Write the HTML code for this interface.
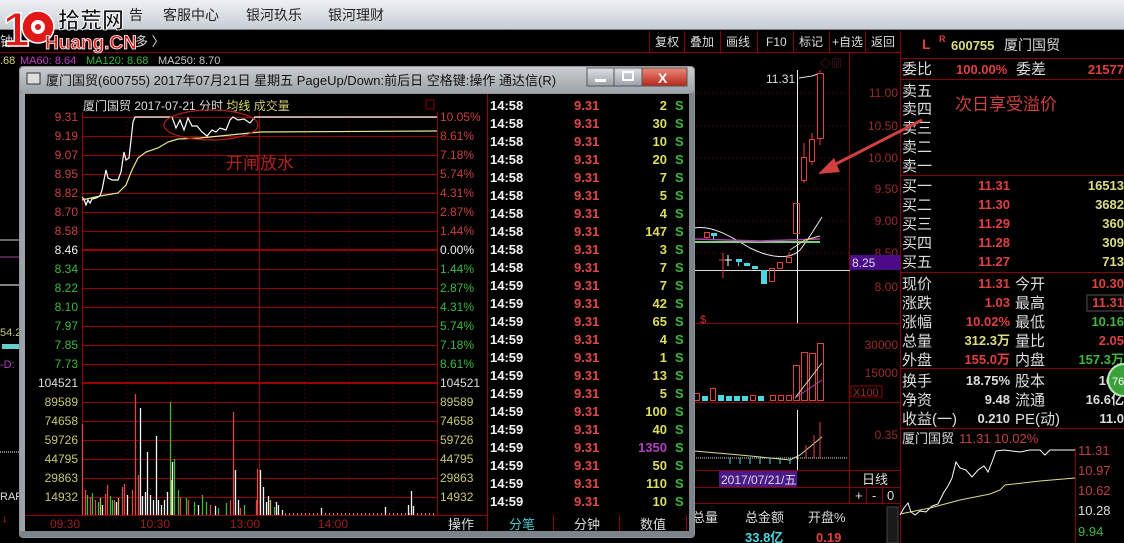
<!DOCTYPE html>
<html><head><meta charset="utf-8"><style>
html,body{margin:0;padding:0;background:#000;width:1124px;height:543px;overflow:hidden}
svg{display:block}
text{font-family:"Liberation Sans","Noto Sans CJK SC",sans-serif}
</style></head><body>
<svg width="1124" height="543" viewBox="0 0 1124 543" xmlns="http://www.w3.org/2000/svg">
<defs>
<linearGradient id="mb" x1="0" y1="0" x2="0" y2="1"><stop offset="0" stop-color="#eef1f4"/><stop offset="1" stop-color="#c5ccd3"/></linearGradient>
<linearGradient id="tb" x1="0" y1="0" x2="0" y2="1"><stop offset="0" stop-color="#c9cdd1"/><stop offset="1" stop-color="#9da3a9"/></linearGradient>
<linearGradient id="cl" x1="0" y1="0" x2="0" y2="1"><stop offset="0" stop-color="#e88a7a"/><stop offset="1" stop-color="#b8281a"/></linearGradient>
<linearGradient id="bt" x1="0" y1="0" x2="0" y2="1"><stop offset="0" stop-color="#dde1e5"/><stop offset="1" stop-color="#9aa1a8"/></linearGradient>
</defs>
<rect width="1124" height="543" fill="#000"/>
<rect x="0" y="0" width="1124" height="30" fill="url(#mb)"/>
<rect x="0" y="29" width="1124" height="1" fill="#7d858c"/>
<g font-size="14" fill="#222">
<text x="129" y="20">告</text>
<text x="163" y="20">客服中心</text><text x="246" y="20">银河玖乐</text><text x="328" y="20">银河理财</text>
</g>
<text x="0" y="46" font-size="13" fill="#ddd">钟</text>
<text x="135" y="46" font-size="13" fill="#ddd">多 〉</text>
<rect x="0" y="52" width="900" height="1" fill="#8b0000"/>
<g stroke="#8b0000" stroke-width="1"><line x1="649.5" y1="31" x2="649.5" y2="52"/><line x1="684.5" y1="31" x2="684.5" y2="52"/><line x1="720.5" y1="31" x2="720.5" y2="52"/><line x1="757.5" y1="31" x2="757.5" y2="52"/><line x1="793.5" y1="31" x2="793.5" y2="52"/><line x1="829.5" y1="31" x2="829.5" y2="52"/><line x1="865.5" y1="31" x2="865.5" y2="52"/><line x1="900.5" y1="31" x2="900.5" y2="543"/></g>
<g font-size="12" fill="#ddd">
<text x="655" y="46">复权</text><text x="690" y="46">叠加</text><text x="726" y="46">画线</text><text x="766" y="46">F10</text><text x="799" y="46">标记</text><text x="832" y="46">+自选</text><text x="871" y="46">返回</text>
</g>
<g font-size="11">
<text x="0" y="64" fill="#d8d870">.68</text><text x="20" y="64" fill="#c040c0">MA60: 8.64</text><text x="86" y="64" fill="#3cb83c">MA120: 8.68</text><text x="158" y="64" fill="#c8c8c8">MA250: 8.70</text>
</g>
<text x="3" y="46" font-size="48" font-weight="bold" fill="#e01818" stroke="#fff" stroke-width="1.5" font-family="Liberation Sans,sans-serif">1</text>
<circle cx="38" cy="27" r="16" fill="#e01818" stroke="#fff" stroke-width="1.5"/>
<circle cx="38" cy="27" r="7" fill="#fff"/><circle cx="38" cy="27" r="3" fill="#e01818"/>
<text x="58" y="28" font-size="22" font-weight="bold" fill="#111" stroke="#fff" stroke-width="0.8">拾荒网</text>
<text x="45" y="49" font-size="19" font-weight="bold" fill="#e01818" stroke="#fff" stroke-width="0.8">Huang.CN</text>

<g font-size="11">
<line x1="0" y1="240" x2="20" y2="240" stroke="#ccc"/><line x1="0" y1="257" x2="20" y2="257" stroke="#a040a0"/><line x1="0" y1="285" x2="20" y2="285" stroke="#fff"/>
<text x="0" y="336" fill="#c8c870">54.2</text>
<rect x="2" y="344" width="18" height="5" fill="#6cc"/>
<text x="0" y="368" fill="#b040c0">-D:</text>
<line x1="0" y1="452" x2="20" y2="452" stroke="#fff" stroke-dasharray="1 1"/>
<text x="0" y="500" fill="#ddd">RAR</text>
<text x="2" y="522" fill="#e02020">↓</text>
</g>

<g stroke="#600" stroke-dasharray="1 3">
<line x1="692" y1="93" x2="850" y2="93"/><line x1="692" y1="126" x2="850" y2="126"/><line x1="692" y1="158" x2="850" y2="158"/><line x1="692" y1="189" x2="850" y2="189"/><line x1="692" y1="221" x2="850" y2="221"/><line x1="692" y1="253" x2="850" y2="253"/>
</g>
<g stroke="#8b0000"><line x1="849.5" y1="53" x2="849.5" y2="503"/><line x1="692" y1="323.5" x2="900" y2="323.5"/><line x1="692" y1="402.5" x2="900" y2="402.5"/><line x1="692" y1="470.5" x2="900" y2="470.5"/><line x1="692" y1="487.5" x2="900" y2="487.5"/><line x1="692" y1="503.5" x2="900" y2="503.5"/></g>
<g font-size="12" fill="#9a2a2a" text-anchor="end">
<text x="898" y="97">11.00</text><text x="898" y="130">10.50</text><text x="898" y="162">10.00</text><text x="898" y="193">9.50</text><text x="898" y="225">9.00</text><text x="898" y="257">8.50</text><text x="898" y="291">8.00</text>
<text x="898" y="349">30000</text><text x="898" y="377">15000</text><text x="898" y="439">0.35</text>
</g>
<rect x="851" y="386" width="31" height="11" fill="none" stroke="#8b0000"/><text x="853" y="396" font-size="11" fill="#9a2a2a">X100</text>
<text x="820" y="67" font-size="11" fill="#6a2020">◇▥</text>
<rect x="850" y="255" width="50" height="15" fill="#4a0a8a"/><text x="852" y="267" font-size="12" fill="#ddd">8.25</text>
<line x1="692" y1="270.5" x2="850" y2="270.5" stroke="#ddd"/>
<line x1="797.5" y1="70" x2="797.5" y2="323" stroke="#eee"/>
<line x1="797.5" y1="410" x2="797.5" y2="470" stroke="#eee"/>
<text x="766" y="83" font-size="12" fill="#ddd">11.31</text>
<polyline points="799,78 812,76 818,74" fill="none" stroke="#ddd"/>
<path d="M694,228 C712,225 730,236 750,248 C770,258 790,260 800,250 C808,240 815,228 822,217" fill="none" stroke="#eee"/>
<line x1="694" y1="242" x2="820" y2="242" stroke="#7cd07c" stroke-width="2"/>
<path d="M694,239 L760,241 L820,239" fill="none" stroke="#b040b0" stroke-width="1.5"/>
<path d="M790,250 L805,240 L820,236" fill="none" stroke="#dddd90"/>
<g fill="none" stroke="#e04040">
<rect x="704.5" y="232.5" width="5" height="5"/>
<line x1="723" y1="253" x2="723" y2="278"/><line x1="719" y1="260" x2="727" y2="260"/>
<rect x="769.5" y="268.5" width="5" height="13"/><rect x="777.5" y="262.5" width="5" height="6"/><rect x="786.5" y="257.5" width="5" height="5"/><line x1="789" y1="252" x2="789" y2="257"/>
<rect x="793.5" y="203.5" width="6" height="30"/>
<line x1="804" y1="143" x2="804" y2="183"/><rect x="801.5" y="157.5" width="5" height="23" fill="#000"/>
<line x1="812" y1="133" x2="812" y2="165"/><rect x="809.5" y="139.5" width="5" height="22" fill="#000"/>
<line x1="820" y1="70" x2="820" y2="145"/><rect x="817.5" y="73.5" width="6" height="65" fill="#000"/>
</g>
<g fill="#4cd8e0"><rect x="711" y="233" width="6" height="3"/><rect x="713" y="233" width="1" height="6"/><rect x="736" y="259" width="6" height="3"/><rect x="738" y="259" width="1" height="7"/><rect x="744" y="263" width="6" height="3"/><rect x="752" y="266" width="6" height="3"/><rect x="761" y="270" width="6" height="14"/></g>
<line x1="728" y1="255" x2="728" y2="266" stroke="#fff"/><line x1="725" y1="260" x2="732" y2="260" stroke="#fff"/>
<text x="700" y="323" font-size="11" fill="#d03030">$</text>
<g fill="none" stroke="#e04040"><rect x="793.5" y="365.5" width="6" height="35"/><rect x="801.5" y="352.5" width="6" height="48"/><rect x="809.5" y="353.5" width="6" height="47"/><rect x="817.5" y="343.5" width="6" height="57"/>
<rect x="710.5" y="388.5" width="5" height="12"/><rect x="750.5" y="395.5" width="5" height="5"/><rect x="770.5" y="395.5" width="5" height="5"/><rect x="778.5" y="395.5" width="5" height="5"/><rect x="786.5" y="395.5" width="5" height="5"/><rect x="694.5" y="393.5" width="5" height="7"/></g>
<g fill="#4cd8e0"><rect x="702" y="396" width="6" height="5"/><rect x="718" y="395" width="6" height="6"/><rect x="726" y="396" width="6" height="5"/><rect x="734" y="396" width="6" height="5"/><rect x="742" y="396" width="6" height="5"/><rect x="758" y="396" width="6" height="5"/></g>
<path d="M795,398 L822,363" stroke="#ddd8a0" fill="none"/><path d="M795,398 L822,380" stroke="#b040b0" fill="none"/>
<path d="M694,451 L740,455 L790,460 L800,455 L822,437" stroke="#dddd90" fill="none"/>
<line x1="694" y1="458" x2="848" y2="458" stroke="#ddd" stroke-dasharray="1 1"/>
<g stroke="#4cd8e0"><line x1="730" y1="458" x2="730" y2="464"/><line x1="740" y1="458" x2="740" y2="464"/><line x1="750" y1="458" x2="750" y2="464"/><line x1="760" y1="458" x2="760" y2="464"/><line x1="770" y1="458" x2="770" y2="464"/><line x1="780" y1="458" x2="780" y2="464"/><line x1="790" y1="458" x2="790" y2="464"/></g>
<g stroke="#e04040"><line x1="806" y1="445" x2="806" y2="458"/><line x1="814" y1="435" x2="814" y2="458"/><line x1="820" y1="422" x2="820" y2="458"/></g>
<rect x="719" y="471" width="78" height="16" fill="#4a1a8a"/><text x="721" y="484" font-size="12" fill="#ddd">2017/07/21/五</text>
<text x="862" y="484" font-size="13" fill="#ddd">日线</text>
<g font-size="13" fill="#ddd"><text x="855" y="500">+</text><text x="872" y="500">-</text><text x="887" y="500">0</text></g>
<line x1="866.5" y1="488" x2="866.5" y2="503" stroke="#8b0000"/><line x1="882.5" y1="488" x2="882.5" y2="503" stroke="#8b0000"/>
<g font-size="13" fill="#ddd"><text x="692" y="522">总量</text><text x="745" y="522">总金额</text><text x="808" y="522">开盘%</text></g>
<text x="745" y="542" font-size="13" font-weight="bold" fill="#4cd8e0">33.8亿</text><text x="816" y="542" font-size="13" font-weight="bold" fill="#e04040">0.19</text>
<rect x="887" y="507" width="11" height="36" fill="#1a1a1a" stroke="#444"/>

<text x="922" y="49" font-size="14" font-weight="bold" fill="#e04040">L</text>
<text x="939" y="42" font-size="9" font-weight="bold" fill="#e04040">R</text>
<text x="951" y="50" font-size="13" font-weight="bold" fill="#dddd80">600755</text>
<text x="1004" y="50" font-size="14" fill="#ddd">厦门国贸</text>
<line x1="900" y1="58.5" x2="1124" y2="58.5" stroke="#8b0000"/>
<g font-size="15" fill="#ddd">
<text x="902" y="74">委比</text>
<text x="902" y="96">卖五</text><text x="902" y="114">卖四</text><text x="902" y="133">卖三</text><text x="902" y="152">卖二</text><text x="902" y="171">卖一</text>
<text x="902" y="191">买一</text><text x="902" y="210">买二</text><text x="902" y="229">买三</text><text x="902" y="248">买四</text><text x="902" y="267">买五</text>
<text x="902" y="289">现价</text><text x="902" y="308">涨跌</text><text x="902" y="327">涨幅</text><text x="902" y="346">总量</text><text x="902" y="365">外盘</text>
<text x="902" y="386">换手</text><text x="902" y="405">净资</text><text x="902" y="424">收益(一)</text>
<text x="1016" y="74">委差</text>
<text x="1015" y="289">今开</text><text x="1015" y="308">最高</text><text x="1015" y="327">最低</text><text x="1015" y="346">量比</text><text x="1015" y="365">内盘</text>
<text x="1015" y="386">股本</text><text x="1015" y="405">流通</text><text x="1015" y="424">PE(动)</text>
</g>
<g stroke="#8b0000"><line x1="900" y1="79.5" x2="1124" y2="79.5"/><line x1="900" y1="175.5" x2="1124" y2="175.5"/><line x1="900" y1="272.5" x2="1124" y2="272.5"/><line x1="900" y1="368.5" x2="1124" y2="368.5"/><line x1="900" y1="428.5" x2="1124" y2="428.5"/><line x1="1075.5" y1="448" x2="1075.5" y2="543"/></g>
<g font-size="13" font-weight="bold">
<text x="956" y="74" fill="#e04040">100.00%</text><text x="1124" y="74" fill="#e04040" text-anchor="end">21577</text>
<g fill="#e04040" text-anchor="end"><text x="1010" y="190">11.31</text><text x="1010" y="209">11.30</text><text x="1010" y="228">11.29</text><text x="1010" y="247">11.28</text><text x="1010" y="266">11.27</text></g>
<g fill="#dddd80" text-anchor="end"><text x="1124" y="190">16513</text><text x="1124" y="209">3682</text><text x="1124" y="228">360</text><text x="1124" y="247">309</text><text x="1124" y="266">713</text></g>
<g text-anchor="end">
<text x="1010" y="288" fill="#e04040">11.31</text><text x="1010" y="307" fill="#e04040">1.03</text><text x="1010" y="326" fill="#e04040">10.02%</text><text x="1010" y="345" fill="#dddd80">312.3万</text><text x="1010" y="364" fill="#e04040">155.0万</text>
<text x="1010" y="385" fill="#ddd">18.75%</text><text x="1010" y="404" fill="#ddd">9.48</text><text x="1010" y="423" fill="#ddd">0.210</text>
<text x="1124" y="288" fill="#e04040">10.30</text><text x="1124" y="307" fill="#e04040">11.31</text><text x="1124" y="326" fill="#3cb83c">10.16</text><text x="1124" y="345" fill="#e04040">2.05</text><text x="1124" y="364" fill="#3cb83c">157.3万</text>
<text x="1124" y="385" fill="#ddd">16.6</text><text x="1124" y="404" fill="#ddd">16.6亿</text><text x="1124" y="423" fill="#ddd">11.0</text>
</g></g>
<rect x="1087" y="295" width="37" height="16" fill="none" stroke="#555"/>
<circle cx="1124" cy="380" r="16" fill="#3aa03a" stroke="#bde8bd" stroke-width="2"/><text x="1112" y="385" font-size="11" fill="#fff">76</text>
<text x="902" y="443" font-size="13" fill="#ddd">厦门国贸</text><text x="959" y="443" font-size="13" fill="#c04040">11.31  10.02%</text>
<g font-size="13" text-anchor="start"><text x="1078" y="455" fill="#c04040">11.31</text><text x="1078" y="475" fill="#c04040">10.97</text><text x="1078" y="495" fill="#c04040">10.62</text><text x="1078" y="515" fill="#ddd">10.28</text><text x="1078" y="536" fill="#3cb83c">9.94</text></g>
<path d="M900,515 L904,508 L908,503 L911,512 L915,515 L920,511 L926,512 L932,506 L938,504 L944,492 L948,486 L952,478 L956,462 L960,468 L966,470 L972,477 L978,470 L984,466 L988,472 L992,462 L996,451 L1004,450 L1012,451 L1020,452 L1030,450 L1040,450 L1045,455 L1050,450 L1075,450" fill="none" stroke="#fff"/>
<path d="M900,514 L930,508 L960,500 L990,494 L1000,490 L1005,485 L1040,481 L1075,478" fill="none" stroke="#dddd90"/>

<text x="955" y="110" font-size="17" fill="#d04040">次日享受溢价</text>
<line x1="922" y1="120" x2="828" y2="168" stroke="#d04040" stroke-width="3"/>
<polygon points="818,174 834,158 840,172" fill="#d04040"/>

<rect x="19" y="66" width="676" height="472" fill="#8e949a" rx="4"/>
<rect x="20" y="67" width="674" height="26" fill="url(#tb)" rx="4"/>
<rect x="20" y="93" width="5" height="443" fill="#9da3a9"/>
<rect x="689" y="93" width="5" height="443" fill="#7d838a"/>
<rect x="20" y="531" width="674" height="6" fill="#7d838a"/>
<rect x="25" y="94" width="664" height="437" fill="#000"/>
<rect x="27" y="73" width="13" height="11" fill="#ddd" stroke="#333"/>
<text x="46" y="85" font-size="13" fill="#111">厦门国贸(600755) 2017年07月21日 星期五 PageUp/Down:前后日 空格键:操作 通达信(R)</text>
<rect x="587" y="68" width="27" height="18" fill="url(#bt)" stroke="#555"/><rect x="595" y="79" width="11" height="3" fill="#fff"/>
<rect x="614" y="68" width="28" height="18" fill="url(#bt)" stroke="#555"/><rect x="623" y="72" width="10" height="8" fill="none" stroke="#fff" stroke-width="2"/>
<rect x="642" y="68" width="45" height="18" fill="url(#cl)" stroke="#555"/><text x="658" y="83" font-size="14" font-weight="bold" fill="#fff">X</text>

<g stroke="#9a0000">
<line x1="82" y1="117.5" x2="437" y2="117.5"/><line x1="82" y1="136.5" x2="437" y2="136.5"/><line x1="82" y1="155.5" x2="437" y2="155.5"/><line x1="82" y1="174.5" x2="437" y2="174.5"/><line x1="82" y1="193.5" x2="437" y2="193.5"/><line x1="82" y1="212.5" x2="437" y2="212.5"/><line x1="82" y1="231.5" x2="437" y2="231.5"/>
<line x1="82" y1="250" x2="437" y2="250" stroke-width="2"/>
<line x1="82" y1="269.5" x2="437" y2="269.5"/><line x1="82" y1="288.5" x2="437" y2="288.5"/><line x1="82" y1="307.5" x2="437" y2="307.5"/><line x1="82" y1="326.5" x2="437" y2="326.5"/><line x1="82" y1="345.5" x2="437" y2="345.5"/><line x1="82" y1="364.5" x2="437" y2="364.5"/>
<line x1="82" y1="383" x2="437" y2="383" stroke-width="2"/>
<line x1="82" y1="402.5" x2="437" y2="402.5"/><line x1="82" y1="421.5" x2="437" y2="421.5"/><line x1="82" y1="440.5" x2="437" y2="440.5"/><line x1="82" y1="459.5" x2="437" y2="459.5"/><line x1="82" y1="478.5" x2="437" y2="478.5"/><line x1="82" y1="497.5" x2="437" y2="497.5"/><line x1="25" y1="515.5" x2="487" y2="515.5"/>
<line x1="82.5" y1="112" x2="82.5" y2="515"/><line x1="259.5" y1="112" x2="259.5" y2="515"/><line x1="437.5" y1="112" x2="437.5" y2="515"/>
</g>
<g stroke="#6a0000" stroke-dasharray="1 3"><line x1="126.5" y1="117" x2="126.5" y2="515"/><line x1="171.5" y1="117" x2="171.5" y2="515"/><line x1="215.5" y1="117" x2="215.5" y2="515"/><line x1="304.5" y1="117" x2="304.5" y2="515"/><line x1="348.5" y1="117" x2="348.5" y2="515"/><line x1="393.5" y1="117" x2="393.5" y2="515"/></g>
<line x1="487.5" y1="94" x2="487.5" y2="531" stroke="#9a0000"/>
<text x="83" y="110" font-size="12" fill="#ddd">厦门国贸  2017-07-21 分时 <tspan fill="#dddd60">均线</tspan> <tspan fill="#c8c870">成交量</tspan></text>
<rect x="426" y="100" width="8" height="9" fill="none" stroke="#8b0000"/>
<g font-size="12" text-anchor="end">
<g fill="#c84040"><text x="78" y="121">9.31</text><text x="78" y="140">9.19</text><text x="78" y="159">9.07</text><text x="78" y="178">8.95</text><text x="78" y="197">8.82</text><text x="78" y="216">8.70</text><text x="78" y="235">8.58</text></g>
<text x="78" y="254" fill="#eee">8.46</text>
<g fill="#3cb83c"><text x="78" y="273">8.34</text><text x="78" y="292">8.22</text><text x="78" y="311">8.10</text><text x="78" y="330">7.97</text><text x="78" y="349">7.85</text><text x="78" y="368">7.73</text></g>
<text x="78" y="387" fill="#ddd">104521</text>
<g fill="#c8c870"><text x="78" y="406">89589</text><text x="78" y="425">74658</text><text x="78" y="444">59726</text><text x="78" y="463">44795</text><text x="78" y="482">29863</text><text x="78" y="501">14932</text></g>
</g>
<g font-size="12">
<g fill="#c84040"><text x="440" y="121">10.05%</text><text x="440" y="140">8.61%</text><text x="440" y="159">7.18%</text><text x="440" y="178">5.74%</text><text x="440" y="197">4.31%</text><text x="440" y="216">2.87%</text><text x="440" y="235">1.44%</text></g>
<text x="440" y="254" fill="#eee">0.00%</text>
<g fill="#3cb83c"><text x="440" y="273">1.44%</text><text x="440" y="292">2.87%</text><text x="440" y="311">4.31%</text><text x="440" y="330">5.74%</text><text x="440" y="349">7.18%</text><text x="440" y="368">8.61%</text></g>
<text x="440" y="387" fill="#ddd">104521</text>
<g fill="#c8c870"><text x="440" y="406">89589</text><text x="440" y="425">74658</text><text x="440" y="444">59726</text><text x="440" y="463">44795</text><text x="440" y="482">29863</text><text x="440" y="501">14932</text></g>
<g fill="#9a2020"><text x="50" y="528">09:30</text><text x="140" y="528">10:30</text><text x="230" y="528">13:00</text><text x="318" y="528">14:00</text></g>
<text x="448" y="529" fill="#ddd" font-size="13">操作</text>
</g>
<path d="M82,197 L84,199 L86,205 L88,200 L90,203 L92,199 L96,198 L100,196 L102,190 L104,180 L106,170 L108,178 L112,180 L118,180 L121,172 L124,152 L126,160 L129,158 L131,140 L133,122 L135,117 L170,117 L172,117 L176,128 L180,120 L184,130 L188,118 L192,126 L197,126 L202,132 L207,136 L212,130 L216,132 L220,128 L226,130 L230,120 L233,117 L238,120 L244,119 L250,123 L255,117 L437,117" fill="none" stroke="#fff" stroke-width="1.2"/>
<path d="M82,200 L100,196 L118,193 L126,185 L132,170 L138,158 L146,152 L158,148 L168,142 L178,139 L200,138 L240,134 L260,132 L437,131" fill="none" stroke="#e8e890" stroke-width="1.2"/>
<ellipse cx="211" cy="125" rx="47" ry="15" fill="none" stroke="#b02020" stroke-width="1.2"/>
<text x="226" y="169" font-size="17" fill="#b02020">开闸放水</text>
<g stroke-width="1.3">
<g stroke="#e04848">
<line x1="82.5" y1="515" x2="82.5" y2="424"/><line x1="85.5" y1="515" x2="85.5" y2="490"/><line x1="90.5" y1="515" x2="90.5" y2="497"/><line x1="95.5" y1="515" x2="95.5" y2="500"/><line x1="105.5" y1="515" x2="105.5" y2="494"/><line x1="107.5" y1="515" x2="107.5" y2="485"/><line x1="114.5" y1="515" x2="114.5" y2="500"/><line x1="122.5" y1="515" x2="122.5" y2="487"/><line x1="124.5" y1="515" x2="124.5" y2="484"/><line x1="132.5" y1="515" x2="132.5" y2="490"/><line x1="135.5" y1="515" x2="135.5" y2="394"/><line x1="138.5" y1="515" x2="138.5" y2="475"/><line x1="180.5" y1="515" x2="180.5" y2="497"/><line x1="188.5" y1="515" x2="188.5" y2="500"/><line x1="210.5" y1="515" x2="210.5" y2="505"/><line x1="230.5" y1="515" x2="230.5" y2="500"/><line x1="233.5" y1="515" x2="233.5" y2="412"/><line x1="240.5" y1="515" x2="240.5" y2="508"/><line x1="256.5" y1="515" x2="256.5" y2="500"/><line x1="257.5" y1="515" x2="257.5" y2="469"/>
</g>
<g stroke="#3cb83c">
<line x1="87.5" y1="515" x2="87.5" y2="495"/><line x1="92.5" y1="515" x2="92.5" y2="493"/><line x1="98.5" y1="515" x2="98.5" y2="502"/><line x1="110.5" y1="515" x2="110.5" y2="496"/><line x1="112.5" y1="515" x2="112.5" y2="500"/><line x1="170.5" y1="515" x2="170.5" y2="402"/><line x1="174.5" y1="515" x2="174.5" y2="459"/><line x1="178.5" y1="515" x2="178.5" y2="490"/><line x1="186.5" y1="515" x2="186.5" y2="498"/><line x1="194.5" y1="515" x2="194.5" y2="502"/><line x1="202.5" y1="515" x2="202.5" y2="495"/><line x1="206.5" y1="515" x2="206.5" y2="502"/><line x1="218.5" y1="515" x2="218.5" y2="508"/><line x1="226.5" y1="515" x2="226.5" y2="503"/><line x1="244.5" y1="515" x2="244.5" y2="505"/><line x1="274.5" y1="515" x2="274.5" y2="507"/>
</g>
<g stroke="#c8b860"><line x1="171.5" y1="515" x2="171.5" y2="480"/><line x1="100.5" y1="515" x2="100.5" y2="498"/><line x1="118.5" y1="515" x2="118.5" y2="498"/><line x1="270.5" y1="515" x2="270.5" y2="500"/></g>
<g stroke="#f4f4f4">
<line x1="102.5" y1="515" x2="102.5" y2="505"/><line x1="116.5" y1="515" x2="116.5" y2="502"/><line x1="127.5" y1="515" x2="127.5" y2="495"/><line x1="140.5" y1="515" x2="140.5" y2="408"/><line x1="142.5" y1="515" x2="142.5" y2="496"/><line x1="145.5" y1="515" x2="145.5" y2="492"/><line x1="147.5" y1="515" x2="147.5" y2="452"/><line x1="150.5" y1="515" x2="150.5" y2="495"/><line x1="153.5" y1="515" x2="153.5" y2="500"/><line x1="156.5" y1="515" x2="156.5" y2="436"/><line x1="158.5" y1="515" x2="158.5" y2="500"/><line x1="161.5" y1="515" x2="161.5" y2="505"/><line x1="164.5" y1="515" x2="164.5" y2="500"/><line x1="167.5" y1="515" x2="167.5" y2="492"/><line x1="172.5" y1="515" x2="172.5" y2="462"/><line x1="198.5" y1="515" x2="198.5" y2="505"/><line x1="215.5" y1="515" x2="215.5" y2="506"/><line x1="235.5" y1="515" x2="235.5" y2="470"/><line x1="238.5" y1="515" x2="238.5" y2="500"/><line x1="260.5" y1="515" x2="260.5" y2="470"/><line x1="263.5" y1="515" x2="263.5" y2="487"/><line x1="266.5" y1="515" x2="266.5" y2="502"/><line x1="268.5" y1="515" x2="268.5" y2="496"/><line x1="276.5" y1="515" x2="276.5" y2="502"/><line x1="278.5" y1="515" x2="278.5" y2="505"/><line x1="282.5" y1="515" x2="282.5" y2="510"/><line x1="321.5" y1="515" x2="321.5" y2="508"/><line x1="385.5" y1="515" x2="385.5" y2="507"/><line x1="408.5" y1="515" x2="408.5" y2="505"/><line x1="411.5" y1="515" x2="411.5" y2="491"/><line x1="413.5" y1="515" x2="413.5" y2="506"/>
</g>
<line x1="285" y1="514" x2="437" y2="514" stroke="#f4f4f4" stroke-dasharray="1 3"/>
</g>
<g font-size="13" font-weight="bold">
<g fill="#f4f4f4"><text x="490" y="110">14:58</text><text x="490" y="128">14:58</text><text x="490" y="146">14:58</text><text x="490" y="164">14:58</text><text x="490" y="182">14:58</text><text x="490" y="200">14:58</text><text x="490" y="218">14:58</text><text x="490" y="236">14:58</text><text x="490" y="254">14:58</text><text x="490" y="272">14:58</text><text x="490" y="290">14:59</text><text x="490" y="308">14:59</text><text x="490" y="326">14:59</text><text x="490" y="344">14:59</text><text x="490" y="362">14:59</text><text x="490" y="380">14:59</text><text x="490" y="398">14:59</text><text x="490" y="416">14:59</text><text x="490" y="434">14:59</text><text x="490" y="452">14:59</text><text x="490" y="470">14:59</text><text x="490" y="488">14:59</text><text x="490" y="506">14:59</text></g>
<g fill="#e04848"><text x="574" y="110">9.31</text><text x="574" y="128">9.31</text><text x="574" y="146">9.31</text><text x="574" y="164">9.31</text><text x="574" y="182">9.31</text><text x="574" y="200">9.31</text><text x="574" y="218">9.31</text><text x="574" y="236">9.31</text><text x="574" y="254">9.31</text><text x="574" y="272">9.31</text><text x="574" y="290">9.31</text><text x="574" y="308">9.31</text><text x="574" y="326">9.31</text><text x="574" y="344">9.31</text><text x="574" y="362">9.31</text><text x="574" y="380">9.31</text><text x="574" y="398">9.31</text><text x="574" y="416">9.31</text><text x="574" y="434">9.31</text><text x="574" y="452">9.31</text><text x="574" y="470">9.31</text><text x="574" y="488">9.31</text><text x="574" y="506">9.31</text></g>
<g fill="#dddd60" text-anchor="end"><text x="667" y="110">2</text><text x="667" y="128">30</text><text x="667" y="146">10</text><text x="667" y="164">20</text><text x="667" y="182">7</text><text x="667" y="200">5</text><text x="667" y="218">4</text><text x="667" y="236">147</text><text x="667" y="254">3</text><text x="667" y="272">7</text><text x="667" y="290">7</text><text x="667" y="308">42</text><text x="667" y="326">65</text><text x="667" y="344">4</text><text x="667" y="362">1</text><text x="667" y="380">13</text><text x="667" y="398">5</text><text x="667" y="416">100</text><text x="667" y="434">40</text><text x="667" y="452" fill="#b040c0">1350</text><text x="667" y="470">50</text><text x="667" y="488">110</text><text x="667" y="506">10</text></g>
<g fill="#3cb83c"><text x="675" y="110">S</text><text x="675" y="128">S</text><text x="675" y="146">S</text><text x="675" y="164">S</text><text x="675" y="182">S</text><text x="675" y="200">S</text><text x="675" y="218">S</text><text x="675" y="236">S</text><text x="675" y="254">S</text><text x="675" y="272">S</text><text x="675" y="290">S</text><text x="675" y="308">S</text><text x="675" y="326">S</text><text x="675" y="344">S</text><text x="675" y="362">S</text><text x="675" y="380">S</text><text x="675" y="398">S</text><text x="675" y="416">S</text><text x="675" y="434">S</text><text x="675" y="452">S</text><text x="675" y="470">S</text><text x="675" y="488">S</text><text x="675" y="506">S</text></g>
</g>
<g stroke="#8b0000"><line x1="553.5" y1="515" x2="553.5" y2="531"/><line x1="619.5" y1="515" x2="619.5" y2="531"/><line x1="686.5" y1="515" x2="686.5" y2="531"/></g>
<g font-size="13"><text x="509" y="529" fill="#4cc8d0">分笔</text><text x="574" y="529" fill="#ddd">分钟</text><text x="640" y="529" fill="#ddd">数值</text></g>
</svg>
</body></html>
